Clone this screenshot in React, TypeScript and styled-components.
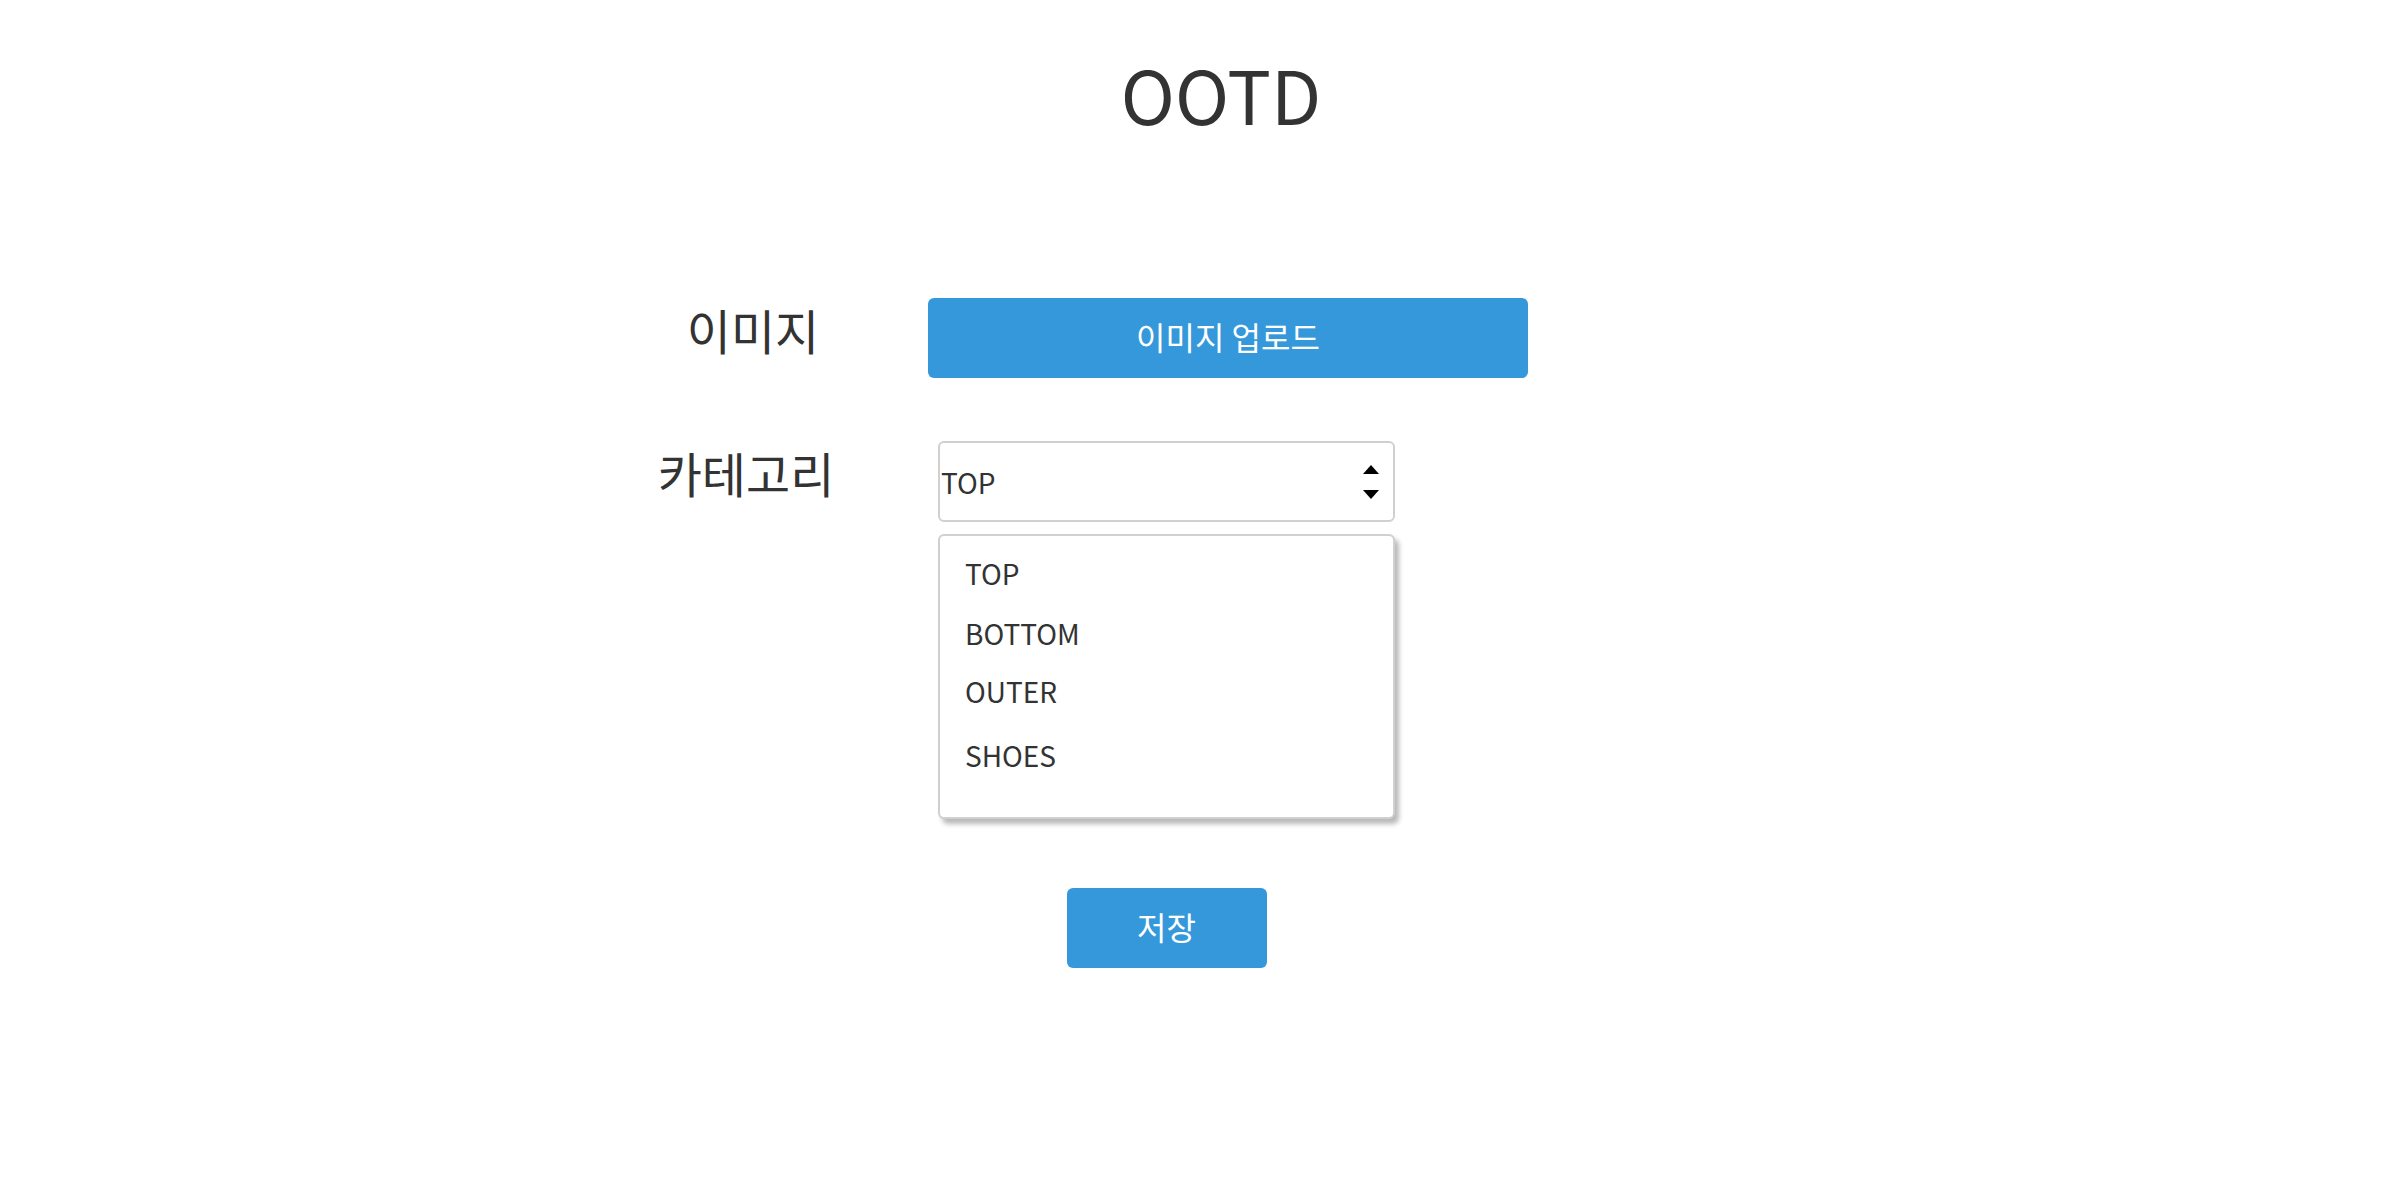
import React from "react";
import styled, { createGlobalStyle } from "styled-components";

const GlobalStyle = createGlobalStyle`
  html, body {
    margin: 0;
    padding: 0;
    background: #ffffff;
  }
  body {
    font-family: "Noto Sans CJK KR", "Noto Sans", sans-serif;
    color: #333333;
  }
`;

const Page = styled.div`
  width: 1100px;
  margin: 0 auto;
  display: flex;
  flex-direction: column;
`;

const Title = styled.h1`
  margin: 0;
  padding: 57px 0 0 42px;
  font-size: 73px;
  font-weight: 400;
  line-height: 1;
  text-align: center;
  color: #333333;
`;

const Form = styled.div`
  margin-top: 168px;
  display: grid;
  grid-template-columns: 200px 1fr;
  column-gap: 78px;
  row-gap: 63px;
  align-items: start;
`;

const Label = styled.div<{ $shift: number }>`
  font-size: 48px;
  line-height: 1;
  text-align: center;
  padding-top: 7px;
  transform: translateX(${(p) => p.$shift}px);
  color: #333333;
`;

const BlueButton = styled.button<{ $width: number }>`
  width: ${(p) => p.$width}px;
  height: 80px;
  border: none;
  border-radius: 6px;
  background: #3598db;
  color: #ffffff;
  font-family: "Noto Sans CJK KR", "Noto Sans", sans-serif;
  font-size: 32px;
  font-weight: 400;
  line-height: 1;
  padding: 0 0 4px;
  cursor: pointer;
`;

const SelectColumn = styled.div`
  margin-left: 10px;
  width: 457px;
  display: flex;
  flex-direction: column;
`;

const SelectBox = styled.div`
  box-sizing: border-box;
  height: 81px;
  border: 2px solid #d0d0d0;
  border-radius: 6px;
  display: flex;
  align-items: center;
  justify-content: space-between;
  padding: 0 14px 0 1px;
  font-size: 28px;
  color: #333333;
`;

const Arrows = styled.div`
  display: flex;
  flex-direction: column;
  gap: 16px;
`;

const Menu = styled.ul`
  box-sizing: border-box;
  list-style: none;
  margin: 12px 0 0;
  height: 285px;
  padding: 17px 0 0 25px;
  border: 2px solid #d0d0d0;
  border-radius: 6px;
  box-shadow: 4px 5px 5px rgba(0, 0, 0, 0.28);
  background: #ffffff;
`;

const MenuItem = styled.li<{ $gap: number }>`
  font-size: 28px;
  line-height: 40px;
  margin-bottom: ${(p) => p.$gap}px;
  color: #333333;
`;

const SaveRow = styled.div`
  margin-top: 69px;
  display: flex;
  justify-content: center;
`;

const Triangle = ({ up }: { up?: boolean }) => (
  <svg width="16" height="9" viewBox="0 0 16 9">
    <path d={up ? "M8 0 L16 9 L0 9 Z" : "M0 0 L16 0 L8 9 Z"} fill="#000" />
  </svg>
);

const items: { name: string; gap: number }[] = [
  { name: "TOP", gap: 20 },
  { name: "BOTTOM", gap: 18 },
  { name: "OUTER", gap: 24 },
  { name: "SHOES", gap: 0 },
];

export default function App() {
  return (
    <>
      <GlobalStyle />
      <Page>
        <Title>OOTD</Title>
        <Form>
          <Label $shift={3}>이미지</Label>
          <div>
            <BlueButton $width={600}>이미지 업로드</BlueButton>
          </div>
          <Label $shift={-4}>카테고리</Label>
          <SelectColumn>
            <SelectBox>
              <span>TOP</span>
              <Arrows>
                <Triangle up />
                <Triangle />
              </Arrows>
            </SelectBox>
            <Menu>
              {items.map((it) => (
                <MenuItem key={it.name} $gap={it.gap}>
                  {it.name}
                </MenuItem>
              ))}
            </Menu>
            <SaveRow>
              <BlueButton $width={200}>저장</BlueButton>
            </SaveRow>
          </SelectColumn>
        </Form>
      </Page>
    </>
  );
}
